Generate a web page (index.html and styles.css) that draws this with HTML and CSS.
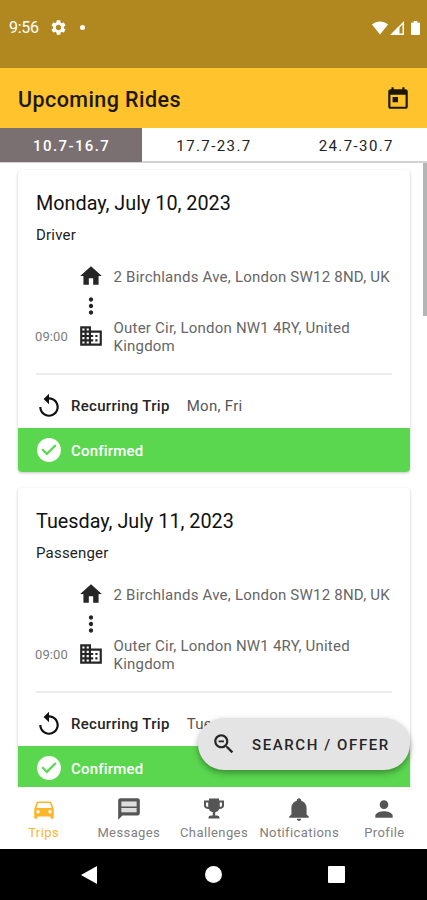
FILE: index.html
```html
<!DOCTYPE html>
<html lang="en">
<head>
<meta charset="utf-8">
<title>Upcoming Rides</title>
<link rel="stylesheet" href="styles.css">
</head>
<body>
<svg class="sprite" aria-hidden="true">
  <symbol id="home" viewBox="0 0 24 24"><path d="M10 20v-6h4v6h5v-8h3L12 3 2 12h3v8z"/></symbol>
  <symbol id="dots" viewBox="0 0 24 24"><path d="M12 8c1.1 0 2-.9 2-2s-.9-2-2-2-2 .9-2 2 .9 2 2 2zm0 2c-1.100 0-2 .9-2 2s.9 2 2 2 2-.9 2-2-.9-2-2-2zm0 6c-1.100 0-2 .9-2 2s.9 2 2 2 2-.9 2-2-.9-2-2-2z"/></symbol>
  <symbol id="office" viewBox="0 0 24 24"><path d="M12 7V3H2v18h20V7H12zM6 19H4v-2h2v2zm0-4H4v-2h2v2zm0-4H4V9h2v2zm0-4H4V5h2v2zm4 12H8v-2h2v2zm0-4H8v-2h2v2zm0-4H8V9h2v2zm0-4H8V5h2v2zm10 12h-8v-2h2v-2h-2v-2h2v-2h-2V9h8v10zm-2-8h-2v2h2v-2zm0 4h-2v2h2v-2z"/></symbol>
  <symbol id="repeat" viewBox="0 0 24 24"><path d="M12 4V0.800L7 5.600l5 4.700V6c3.870 0 7 3.130 7 7s-3.130 7-7 7-7-3.130-7-7H3c0 4.970 4.030 9 9 9s9-4.030 9-9-4.030-9-9-9z"/></symbol>
  <symbol id="check" viewBox="0 0 24 24"><path d="M12 1C5.920 1 1 5.920 1 12s4.920 11 11 11 11-4.920 11-11S18.080 1 12 1zm-2 16l-5-5 1.410-1.410L10 14.170l7.590-7.590L19 8l-9 9z"/></symbol>
</svg>
<div class="screen">
  <div class="status">
    <span class="clock">9:56</span>
    <svg class="gear" viewBox="2 2 20 20"><path d="M19.140 12.940c.04-.3.060-.61.060-.94 0-.32-.02-.64-.07-.94l2.030-1.580c.18-.14.230-.41.120-.61l-1.920-3.320c-.12-.22-.37-.29-.59-.22l-2.390.96c-.5-.38-1.030-.7-1.620-.94l-.36-2.540c-.04-.24-.24-.41-.48-.41h-3.840c-.24 0-.43.17-.47.41l-.36 2.540c-.59.24-1.130.57-1.620.94l-2.390-.96c-.22-.08-.47 0-.59.220L2.740 8.870c-.12.21-.08.47.120.61l2.030 1.580c-.05.3-.09.63-.09.940s.02.64.070.94l-2.030 1.580c-.18.14-.23.41-.12.61l1.920 3.320c.12.22.37.290.59.220l2.390-.96c.5.380 1.030.7 1.620.94l.36 2.540c.05.24.240.41.480.41h3.840c.24 0 .440-.17.470-.41l.36-2.540c.59-.24 1.130-.56 1.620-.94l2.390.96c.22.080.47 0 .59-.22l1.920-3.320c.12-.22.070-.47-.12-.61l-2.010-1.580zM12 15.600c-1.980 0-3.600-1.620-3.600-3.600s1.620-3.600 3.600-3.600 3.600 1.620 3.600 3.600-1.620 3.600-3.600 3.600z"/></svg>
    <i class="dot"></i>
    <svg class="wifi" viewBox="0 0 16 14"><path d="M0 3.500C4.500-.6 11.500-.6 16 3.500L8 13.500z"/></svg>
    <svg class="signal" viewBox="0 0 14 14"><path fill-rule="evenodd" d="M0 14L14 0v14zM9.500 6.500V12.500H12.500V3.500z"/></svg>
    <svg class="battery" viewBox="0 0 9 14"><path d="M2.700 0h3.600v1.400H8q1 0 1 1V13q0 1-1 1H1q-1 0-1-1V2.400q0-1 1-1h1.700z"/></svg>
  </div>
  <header class="appbar">
    <h1>Upcoming Rides</h1>
    <svg class="icon" viewBox="0 0 24 24"><path d="M19 4h-1V2h-2v2H8V2H6v2H5c-1.110 0-2 .9-2 2v14c0 1.100.89 2 2 2h14c1.100 0 2-.9 2-2V6c0-1.100-.9-2-2-2zm0 16H5V9h14v11zM7 11h5v5H7z"/></svg>
  </header>
  <nav class="tabs"><span class="tab active">10.7-16.7</span><span class="tab">17.7-23.7</span><span class="tab">24.7-30.7</span></nav>
  <main class="list">
    <article class="card">
      <div class="body">
        <h2>Monday, July 10, 2023</h2>
        <p class="role">Driver</p>
        <div class="route">
          <svg class="icon r1"><use href="#home"/></svg><span class="addr r1">2 Birchlands Ave, London SW12 8ND, UK</span>
          <svg class="icon r2"><use href="#dots"/></svg>
          <span class="time">09:00</span><svg class="icon r3"><use href="#office"/></svg><span class="addr r3">Outer Cir, London NW1 4RY, United Kingdom</span>
        </div>
        <div class="recur"><svg class="icon"><use href="#repeat"/></svg><b>Recurring Trip</b><span>Mon, Fri</span></div>
      </div>
      <div class="state"><svg class="icon"><use href="#check"/></svg><b>Confirmed</b></div>
    </article>
    <article class="card">
      <div class="body">
        <h2>Tuesday, July 11, 2023</h2>
        <p class="role">Passenger</p>
        <div class="route">
          <svg class="icon r1"><use href="#home"/></svg><span class="addr r1">2 Birchlands Ave, London SW12 8ND, UK</span>
          <svg class="icon r2"><use href="#dots"/></svg>
          <span class="time">09:00</span><svg class="icon r3"><use href="#office"/></svg><span class="addr r3">Outer Cir, London NW1 4RY, United Kingdom</span>
        </div>
        <div class="recur"><svg class="icon"><use href="#repeat"/></svg><b>Recurring Trip</b><span>Tue</span></div>
      </div>
      <div class="state"><svg class="icon"><use href="#check"/></svg><b>Confirmed</b></div>
    </article>
    <i class="scrollbar"></i>
    <button class="fab"><svg class="icon" viewBox="0 0 24 24"><path d="M15.500 14h-.79l-.28-.27C15.410 12.590 16 11.110 16 9.500 16 5.910 13.090 3 9.500 3S3 5.910 3 9.500 5.910 16 9.500 16c1.610 0 3.090-.59 4.230-1.570l.27.28v.79l5 4.990L20.490 19l-4.990-5zm-6 0C7.010 14 5 11.990 5 9.500S7.010 5 9.500 5 14 7.010 14 9.500 11.990 14 9.500 14zM7 8.700h5v1.600H7z"/></svg><span>SEARCH / OFFER</span></button>
  </main>
  <nav class="bottom">
    <a class="item on"><svg class="icon" viewBox="0 0 24 24"><path d="M18.920 6.010C18.720 5.420 18.160 5 17.500 5h-11c-.66 0-1.210.42-1.420 1.010L3 12v8c0 .55.450 1 1 1h1c.55 0 1-.45 1-1v-1h12v1c0 .55.450 1 1 1h1c.55 0 1-.45 1-1v-8l-2.080-5.990zM6.500 16c-.83 0-1.500-.67-1.500-1.500S5.670 13 6.500 13s1.500.67 1.500 1.500S7.330 16 6.500 16zm11 0c-.83 0-1.500-.67-1.500-1.500s.67-1.500 1.500-1.500 1.500.67 1.500 1.500-.67 1.500-1.500 1.500zM5 11l1.500-4.500h11L19 11H5z"/></svg><span>Trips</span></a>
    <a class="item"><svg class="icon" viewBox="0 0 24 24"><path fill="#ddd" d="M5 5h14v10H5z"/><path d="M20 2H4c-1.100 0-1.990.9-1.990 2L2 22l4-4h14c1.100 0 2-.9 2-2V4c0-1.100-.9-2-2-2zM5 15V11h14v4zM5 9.800V5h14v4.800z" fill-rule="evenodd"/></svg><span>Messages</span></a>
    <a class="item"><svg class="icon" viewBox="-1 -.5 26 26"><path fill-rule="evenodd" d="M7 2h10v2h5v5c0 2-1.500 3.500-4.800 3.500-.7 1.700-2.200 2.900-4 3.300V19H15c1.200 0 2.500.8 2.500 2v1h-11v-1c0-1.200 1.300-2 2.500-2h1.800v-3.200c-1.800-.4-3.300-1.600-4-3.300C3.500 12.500 2 11 2 9V4h5zM4 6v3c0 .8.800 1.400 2.200 1.500V6zm16 0h-2.200v4.500C19.200 10.400 20 9.800 20 9z"/></svg><span>Challenges</span></a>
    <a class="item"><svg class="icon" viewBox="0 0 24 24"><path d="M21 19v1H3v-1l2-2v-6c0-3.100 2.030-5.830 5-6.710V4c0-1.100.9-2 2-2s2 .9 2 2v.29c2.970.88 5 3.610 5 6.710v6l2 2zm-7 2c0 1.100-.9 2-2 2s-2-.9-2-2"/></svg><span>Notifications</span></a>
    <a class="item"><svg class="icon" viewBox="0 0 24 24"><path d="M12 12c2.210 0 4-1.790 4-4s-1.790-4-4-4-4 1.790-4 4 1.790 4 4 4zm0 2c-2.670 0-8 1.340-8 4v2h16v-2c0-2.660-5.330-4-8-4z"/></svg><span>Profile</span></a>
  </nav>
  <div class="system">
    <svg viewBox="0 0 18 20"><path d="M17 1v18L1 10z"/></svg>
    <i class="circle"></i>
    <i class="square"></i>
  </div>
</div>
</body>
</html>
```
FILE: styles.css
```css
* { box-sizing: border-box; }
body { margin: 0; font-family: Roboto, sans-serif; background: #fff; color: #111; }
h1, h2, p { margin: 0; font-weight: 400; }
b { font-weight: 500; }
.sprite { display: none; }
.icon { width: 26px; height: 26px; fill: currentColor; flex: none; display: block; }
.screen { width: 427px; height: 900px; display: flex; flex-direction: column; overflow: hidden; }

.status { height: 68px; flex: none; background: #b18820; color: #fff; display: flex; align-items: center; padding: 0 7px 13px 9px; }
.status svg { fill: #fff; flex: none; }
.clock { font-size: 16px; line-height: 20px; width: 42px; letter-spacing: -.3px; padding-top: 1px; }
.gear { width: 15px; height: 15px; }
.dot { width: 5px; height: 5px; border-radius: 50%; background: #fff; margin-left: 14px; }
.wifi { width: 16px; height: 14px; margin-left: auto; }
.signal { width: 14px; height: 14px; margin-left: 2px; }
.battery { width: 9px; height: 14px; margin-left: 7px; }

.appbar { height: 60px; flex: none; background: #ffc32d; color: #1d1806; display: flex; align-items: center; justify-content: space-between; padding: 3px 16px 3px 18px; }
.appbar h1 { font-size: 21.5px; letter-spacing: .42px; font-weight: 500; padding-top: 3px; }

.tabs { height: 35px; flex: none; display: flex; border-bottom: 2px solid #d2d2d2; }
.tab { flex: 1; text-align: center; font-size: 15px; line-height: 37px; letter-spacing: 1.4px; padding-left: 1px; color: #222; }
.tab.active { background: #7a7071; color: #fff; font-weight: 500; height: 34px; }

.list { flex: 1; min-height: 0; position: relative; overflow: hidden; padding: 7px 17px 0 18px; }
.card { height: 302px; margin-bottom: 16px; border-radius: 4px; overflow: hidden; background: #fff; box-shadow: 0 1px 3px rgba(0,0,0,.24); display: flex; flex-direction: column; }
.body { flex: 1; min-height: 0; padding: 22px 18px 0; }
h2 { font-size: 19.8px; line-height: 24px; }
.role { font-size: 15px; line-height: 20px; margin-top: 9px; letter-spacing: .2px; color: #222; }
.route { display: grid; grid-template-columns: 42px 35.500px 1fr; grid-template-rows: 26px 34px 26px; align-items: center; height: 130px; padding-top: 18px; align-content: start; border-bottom: 2px solid #ececec; color: #262626; }
.r1 { grid-row: 1; }
.r2 { grid-row: 2; }
.r3 { grid-row: 3; }
.icon.r1, .icon.r2, .icon.r3 { grid-column: 2; }
.addr { grid-column: 3; font-size: 15px; line-height: 18px; letter-spacing: .22px; color: #666; padding-top: 1px; }
.addr.r3 { padding-top: 2px; }
.time { grid-row: 3; grid-column: 1; font-size: 13px; letter-spacing: .1px; color: #7c7c7c; margin-left: -1px; }
.recur { display: flex; align-items: center; height: 62px; font-size: 15px; }
.recur b, .state b { margin-left: 9px; letter-spacing: .3px; }
.recur b { color: #262626; }
.recur span { margin-left: 17px; letter-spacing: .3px; color: #555; }
.state { height: 44px; flex: none; background: #5ad74f; color: #fff; display: flex; align-items: center; padding-left: 18px; font-size: 15px; }
.state b { letter-spacing: .2px; padding-top: 1px; }
.scrollbar { position: absolute; right: 0; top: 0; width: 4px; height: 153px; background: #b5b5b5; }

.fab { position: absolute; left: 198px; top: 555px; width: 212px; height: 52px; border: 0; border-radius: 26px; background: #e4e4e4; color: #262626; display: flex; align-items: center; padding: 0 0 0 13px; font: 500 15px Roboto, sans-serif; letter-spacing: 1.6px; box-shadow: 0 3px 6px rgba(0,0,0,.35); }
.fab span { margin-left: 15px; padding-top: 1px; }

.bottom { height: 62px; flex: none; display: flex; background: #fff; padding-left: 1px; }
.item { flex: 1 1 0; display: flex; flex-direction: column; align-items: center; padding-top: 9px; color: #555; font-size: 13px; letter-spacing: .4px; }
.item span { line-height: 18px; margin-top: 2px; color: #808080; white-space: nowrap; }
.item.on, .item.on span { color: #fbb62b; }
.system { height: 51px; flex: none; background: #000; display: flex; align-items: center; padding-left: 80px; }
.system svg { width: 18px; height: 20px; fill: #fff; }
.circle { width: 17px; height: 17px; border-radius: 50%; background: #fff; margin-left: 107px; }
.square { width: 17px; height: 17px; border-radius: 1px; background: #fff; margin-left: 106px; }
```
